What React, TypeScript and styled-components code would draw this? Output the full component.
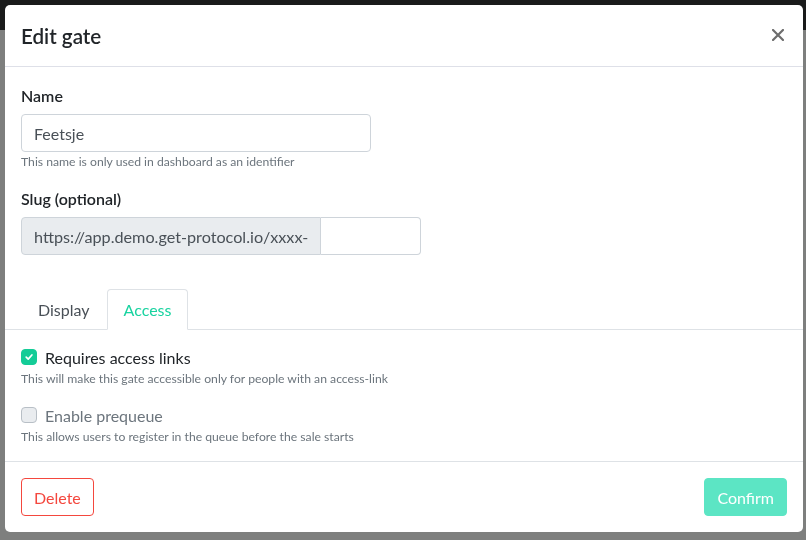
import styled, { createGlobalStyle } from "styled-components"

const GlobalStyle = createGlobalStyle`
  html, body {
    margin: 0;
    padding: 0;
  }
  body {
    font-family: Lato, "Noto Sans", sans-serif;
    color: #212529;
    background: #7e7f7e;
  }
  * {
    box-sizing: border-box;
  }
`

const CheckIcon = () => (
  <svg width="10" height="10" viewBox="0 0 10 10">
    <path d="M2.2 5.2 L4.2 7.1 L7.9 3" fill="none" stroke="#fff" strokeWidth="1.7" strokeLinecap="round" strokeLinejoin="round" />
  </svg>
)

const CloseIcon = () => (
  <svg width="12" height="12" viewBox="0 0 12 12">
    <path d="M1 1 L11 11 M11 1 L1 11" stroke="#6d6d6d" strokeWidth="2.2" strokeLinecap="square" />
  </svg>
)

const App = () => {
  return (
    <>
      <GlobalStyle />
      <Page>
        <Navbar />
      </Page>
      <Overlay>
        <Modal>
          <Header>
            <Title>Edit gate</Title>
            <CloseButton aria-label="Close">
              <CloseIcon />
            </CloseButton>
          </Header>

          <Form>
            <Field>
              <Label>Name</Label>
              <Input defaultValue="Feetsje" />
              <Hint>This name is only used in dashboard as an identifier</Hint>
            </Field>
            <Field>
              <Label>Slug (optional)</Label>
              <InputGroup>
                <Prepend>https://app.demo.get-protocol.io/xxxx-</Prepend>
                <GroupInput />
              </InputGroup>
            </Field>
          </Form>

          <Tabs>
            <Tab>Display</Tab>
            <Tab $active>Access</Tab>
          </Tabs>

          <TabPane>
            <CheckRow>
              <Box $checked>
                <CheckIcon />
              </Box>
              <CheckLabel>Requires access links</CheckLabel>
            </CheckRow>
            <Hint>This will make this gate accessible only for people with an access-link</Hint>
            <CheckRow $spaced>
              <Box />
              <CheckLabel $disabled>Enable prequeue</CheckLabel>
            </CheckRow>
            <Hint>This allows users to register in the queue before the sale starts</Hint>
          </TabPane>

          <Footer>
            <DeleteButton>Delete</DeleteButton>
            <ConfirmButton>Confirm</ConfirmButton>
          </Footer>
        </Modal>
      </Overlay>
    </>
  )
}

const Page = styled.div`
  height: 540px;
  background: #7e7f7e;
`

const Navbar = styled.div`
  height: 30px;
  background: #1a1b1b;
`

const Overlay = styled.div`
  position: fixed;
  inset: 0;
  padding: 5px 3px 8px 5px;
`

const Modal = styled.div`
  background: #fff;
  border-radius: 5px;
  display: flex;
  flex-direction: column;
  overflow: hidden;
`

const Header = styled.div`
  height: 62px;
  display: flex;
  align-items: center;
  justify-content: space-between;
  padding: 0 19px 0 16px;
  border-bottom: 1px solid #dee0e8;
`

const Title = styled.h5`
  margin: 0;
  font-size: 20.6px;
  font-weight: 600;
  line-height: 24px;
  color: #212529;
`

const CloseButton = styled.button`
  border: 0;
  background: none;
  padding: 0;
  display: flex;
  margin-top: -1px;
`

const Form = styled.div`
  padding: 18px 16px 0;
`

const Field = styled.div`
  margin-bottom: 18px;

  & + & {
    margin-bottom: 34px;
  }
`

const Label = styled.div`
  font-size: 16px;
  font-weight: 600;
  line-height: 22px;
  margin-bottom: 7px;
  color: #212529;
`

const Input = styled.input`
  display: block;
  width: 350px;
  height: 38px;
  padding: 6px 12px;
  font: inherit;
  font-size: 16px;
  color: #495057;
  border: 1px solid #ced4da;
  border-radius: 4px;
  outline: none;
`

const Hint = styled.div`
  margin-top: 2px;
  font-size: 12.2px;
  line-height: 16px;
  color: #6c757d;
`

const InputGroup = styled.div`
  display: flex;
  width: 400px;
  height: 38px;
`

const Prepend = styled.div`
  display: flex;
  align-items: center;
  width: 300px;
  padding: 0 12px;
  font-size: 16.2px;
  color: #495057;
  background: #e9ecef;
  border: 1px solid #ced4da;
  border-radius: 4px 0 0 4px;
  white-space: nowrap;
`

const GroupInput = styled.input`
  flex: 1;
  min-width: 0;
  font: inherit;
  border: 1px solid #ced4da;
  border-left: 0;
  border-radius: 0 4px 4px 0;
  outline: none;
`

const Tabs = styled.div`
  display: flex;
  padding-left: 16px;
  border-bottom: 1px solid #dee2e6;
`

const Tab = styled.div<{ $active?: boolean }>`
  margin-bottom: -1px;
  padding: 8px 16px;
  font-size: 16px;
  line-height: 23px;
  border: 1px solid ${(p) => (p.$active ? "#dee2e6" : "transparent")};
  border-bottom-color: ${(p) => (p.$active ? "#fff" : "transparent")};
  border-radius: 4px 4px 0 0;
  background: ${(p) => (p.$active ? "#fff" : "transparent")};
  color: ${(p) => (p.$active ? "#19d3a0" : "#495057")};
`

const TabPane = styled.div`
  padding: 15px 16px 16px;
`

const CheckRow = styled.div<{ $spaced?: boolean }>`
  display: flex;
  align-items: center;
  gap: 8px;
  height: 24px;
  margin-top: ${(p) => (p.$spaced ? "16px" : "0")};
`

const Box = styled.span<{ $checked?: boolean }>`
  width: 16px;
  height: 16px;
  border-radius: 4px;
  display: flex;
  align-items: center;
  justify-content: center;
  background: ${(p) => (p.$checked ? "#14cc97" : "#e9ecef")};
  border: 1px solid ${(p) => (p.$checked ? "#14cc97" : "#b8bfc6")};
`

const CheckLabel = styled.span<{ $disabled?: boolean }>`
  font-size: 16px;
  color: ${(p) => (p.$disabled ? "#6c757d" : "#212529")};
`

const Footer = styled.div`
  display: flex;
  justify-content: space-between;
  padding: 16px;
  border-top: 1px solid #dee2e6;
`

const ButtonBase = styled.button`
  height: 38px;
  padding: 0 12px;
  font: inherit;
  font-size: 16px;
  border-radius: 4px;
`

const DeleteButton = styled(ButtonBase)`
  background: #fff;
  color: #f4473e;
  border: 1px solid #f4473e;
`

const ConfirmButton = styled(ButtonBase)`
  background: #5ce5c4;
  color: #fff;
  border: 1px solid #5ce5c4;
`

export default App
